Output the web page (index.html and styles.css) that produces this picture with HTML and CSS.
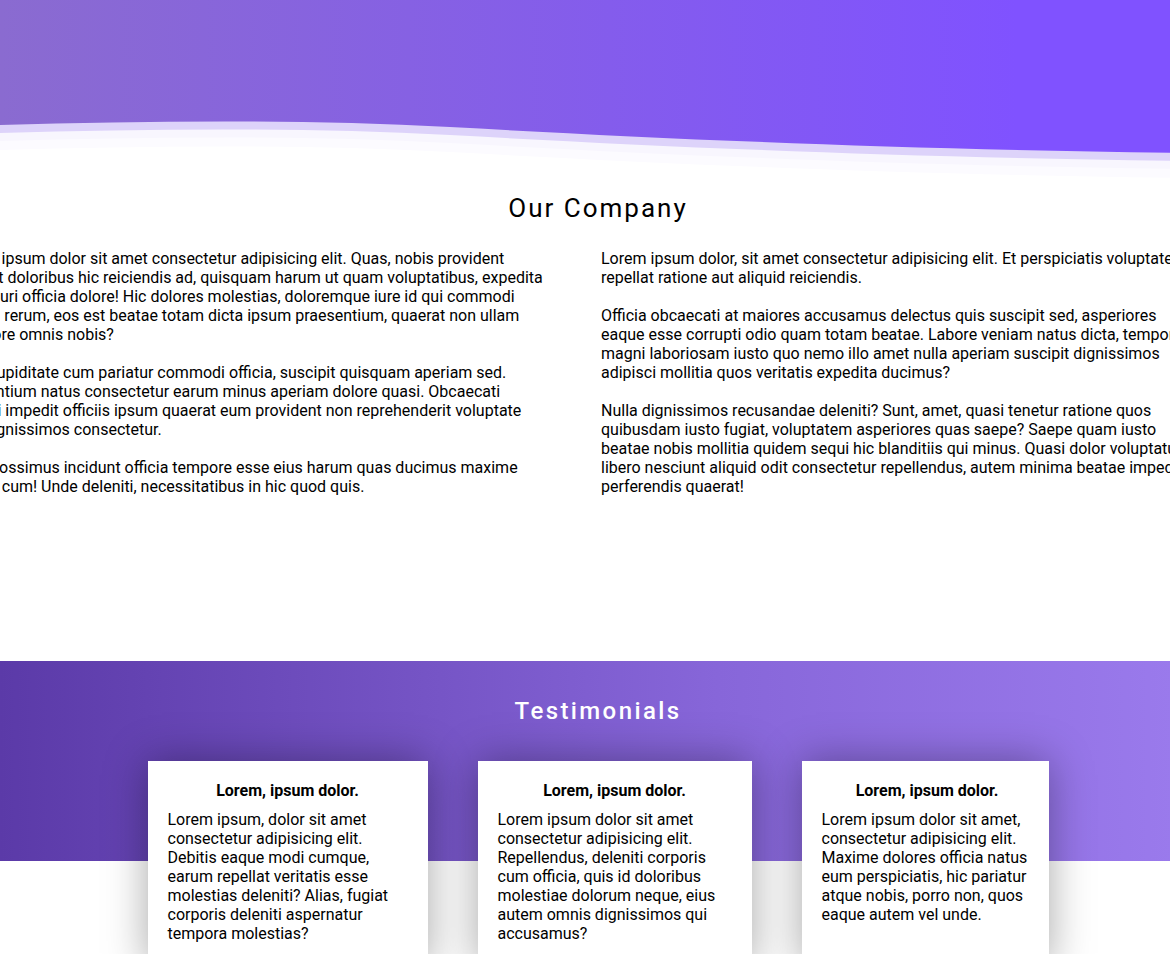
FILE: index.html
```html
<!DOCTYPE html>
<html lang="en">
<head>
<meta charset="utf-8">
<title>Our Company</title>
<link rel="stylesheet" href="styles.css">
</head>
<body>
<div class="page">
  <header class="hero">
    <svg class="hero-wave" viewBox="0 0 1196 180" preserveAspectRatio="none" aria-hidden="true">
      <path class="wave-lavender" d="M0,125 C150,121 300,119 450,127 C650,138 900,150 1196,153 V180 H0 Z"/>
      <path class="wave-faint1" d="M0,133 C150,129 300,127 450,135 C650,146 900,158 1196,161 V180 H0 Z"/>
      <path class="wave-faint2" d="M0,141 C150,137 300,135 450,143 C650,154 900,166 1196,169 V180 H0 Z"/>
      <path class="wave-white" d="M0,150 C150,146 300,144 450,152 C650,163 900,175 1196,178 V180 H0 Z"/>
    </svg>
  </header>

  <section class="about">
    <h2 class="about-title">Our Company</h2>
    <div class="about-cols">
      <div class="about-col">
        <p>Lorem ipsum dolor sit amet consectetur adipisicing elit. Quas, nobis provident Eveniet doloribus hic reiciendis ad, quisquam harum ut quam voluptatibus, expedita Iure acuri officia dolore! Hic dolores molestias, doloremque iure id qui commodi Harum rerum, eos est beatae totam dicta ipsum praesentium, quaerat non ullam Tempore omnis nobis?</p>
        <p>Quia cupiditate cum pariatur commodi officia, suscipit quisquam aperiam sed. Laudantium natus consectetur earum minus aperiam dolore quasi. Obcaecati Delenti impedit officiis ipsum quaerat eum provident non reprehenderit voluptate Nisi dignissimos consectetur.</p>
        <p>Nam possimus incidunt officia tempore esse eius harum quas ducimus maxime harum cum! Unde deleniti, necessitatibus in hic quod quis.</p>
      </div>
      <div class="about-col">
        <p>Lorem ipsum dolor, sit amet consectetur adipisicing elit. Et perspiciatis voluptates repellat ratione aut aliquid reiciendis.</p>
        <p>Officia obcaecati at maiores accusamus delectus quis suscipit sed, asperiores eaque esse corrupti odio quam totam beatae. Labore veniam natus dicta, tempore magni laboriosam iusto quo nemo illo amet nulla aperiam suscipit dignissimos adipisci mollitia quos veritatis expedita ducimus?</p>
        <p>Nulla dignissimos recusandae deleniti? Sunt, amet, quasi tenetur ratione quos quibusdam iusto fugiat, voluptatem asperiores quas saepe? Saepe quam iusto beatae nobis mollitia quidem sequi hic blanditiis qui minus. Quasi dolor voluptatum libero nesciunt aliquid odit consectetur repellendus, autem minima beatae impedit perferendis quaerat!</p>
      </div>
    </div>
  </section>

  <section class="testimonials">
    <h2 class="testimonials-title">Testimonials</h2>
    <div class="cards">
      <article class="card card--a">
        <h3 class="card-title">Lorem, ipsum dolor.</h3>
        <p class="card-text">Lorem ipsum, dolor sit amet consectetur adipisicing elit. Debitis eaque modi cumque, earum repellat veritatis esse molestias deleniti? Alias, fugiat corporis deleniti aspernatur tempora molestias?</p>
      </article>
      <article class="card card--b">
        <h3 class="card-title">Lorem, ipsum dolor.</h3>
        <p class="card-text">Lorem ipsum dolor sit amet consectetur adipisicing elit. Repellendus, deleniti corporis cum officia, quis id doloribus molestiae dolorum neque, eius autem omnis dignissimos qui accusamus?</p>
      </article>
      <article class="card card--c">
        <h3 class="card-title">Lorem, ipsum dolor.</h3>
        <p class="card-text">Lorem ipsum dolor sit amet, consectetur adipisicing elit. Maxime dolores officia natus eum perspiciatis, hic pariatur atque nobis, porro non, quos eaque autem vel unde.</p>
      </article>
    </div>
  </section>
</div>
</body>
</html>
```

FILE: styles.css
```css
html, body {
  margin: 0;
  padding: 0;
  overflow-x: hidden;
  background: #ffffff;
}

body {
  font-family: Roboto, "Liberation Sans", Arial, sans-serif;
  font-size: 16px;
  color: #000000;
}

.page {
  width: 1196px;
}

/* Hero with wave */
.hero {
  background: linear-gradient(to right, #8a6bd0 0%, #8052ff 85%);
}

.hero-wave {
  display: block;
  width: 100%;
  height: 180px;
}

.wave-lavender { fill: #ddd3fa; }
.wave-faint1 { fill: #f8f6fe; }
.wave-faint2 { fill: #fcfbff; }
.wave-white { fill: #ffffff; }

/* About */
.about {
  padding-bottom: 165px;
}

.about-title {
  margin: 13px 0 26px;
  font-size: 26px;
  line-height: 30px;
  font-weight: 400;
  letter-spacing: 2px;
  text-align: center;
}

.about-cols {
  display: grid;
  grid-template-columns: 594px 595px;
  column-gap: 55px;
  margin-left: -48px;
  width: 1244px;
}

.about-col p {
  margin: 0 0 19px;
  line-height: 19px;
}

.about-col p:last-child {
  margin-bottom: 0;
}

/* Testimonials */
.testimonials {
  padding-top: 35px;
  background: linear-gradient(to right, #5b3aa8 0%, #8766d9 60%, #9b7bed 100%) top left / 100% 200px no-repeat;
}

.testimonials-title {
  margin: 0 0 35px;
  font-size: 24px;
  line-height: 30px;
  font-weight: 500;
  letter-spacing: 2.4px;
  color: #ffffff;
  text-align: center;
}

.cards {
  display: flex;
  justify-content: center;
  gap: 50px;
}

.card {
  box-sizing: border-box;
  background: #ffffff;
  padding: 20px 20px 24px;
  box-shadow: 0 0 40px rgba(0, 0, 0, 0.35);
}

.card--a { width: 280px; }
.card--b { width: 274px; }
.card--c { width: 247px; padding-right: 16px; }

.card-title {
  margin: 0 0 10px;
  font-size: 16px;
  line-height: 19px;
  font-weight: 700;
  text-align: center;
}

.card-text {
  margin: 0;
  line-height: 19px;
}
```
